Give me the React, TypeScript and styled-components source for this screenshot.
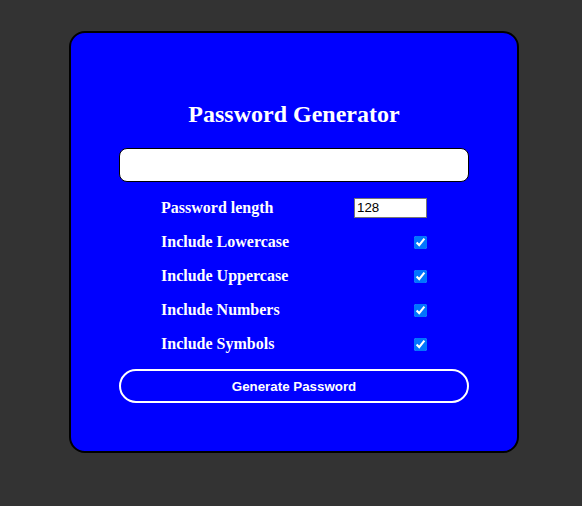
import React from "react";
import styled, { createGlobalStyle } from "styled-components";

const Global = createGlobalStyle`
  html, body {
    margin: 0;
    padding: 0;
    background: #333333;
    width: 582px;
    height: 506px;
    overflow: hidden;
  }
`;

const Page = styled.div`
  padding: 31px 0 0 69px;
`;

const Card = styled.div`
  box-sizing: border-box;
  width: 450px;
  height: 422px;
  background: #0000ff;
  border: 2px solid #000;
  border-radius: 16px;
  padding: 67px 0 0 48px;
  display: flex;
  flex-direction: column;
`;

const Title = styled.h2`
  margin: 0;
  width: 350px;
  text-align: center;
  font-family: "Liberation Serif", "Times New Roman", serif;
  font-weight: bold;
  font-size: 24px;
  line-height: 28px;
  color: #fff;
`;

const Output = styled.input`
  box-sizing: border-box;
  margin-top: 20px;
  width: 350px;
  height: 34px;
  border: 1px solid #000;
  border-radius: 8px;
  background: #fff;
  padding: 0 8px;
  font-family: "Liberation Sans", Arial, sans-serif;
  font-size: 14px;
  outline: none;
`;

const Options = styled.div`
  margin-top: 8px;
  margin-left: 42px;
  width: 266px;
  display: flex;
  flex-direction: column;
`;

const Row = styled.label<{ $first?: boolean }>`
  display: flex;
  align-items: center;
  justify-content: space-between;
  height: ${(p) => (p.$first ? 35 : 34)}px;
  font-family: "Liberation Serif", "Times New Roman", serif;
  font-weight: bold;
  font-size: 16px;
  color: #fff;
`;

const NumberInput = styled.input`
  box-sizing: border-box;
  width: 73px;
  height: 20px;
  margin: 0;
  padding: 1px 2px;
  border: 1px solid #767676;
  background: #fff;
  font-family: "Liberation Sans", Arial, sans-serif;
  font-size: 13.333px;
  color: #000;
`;

const Check = styled.input`
  width: 13px;
  height: 13px;
  margin: 0;
`;

const Button = styled.button`
  box-sizing: border-box;
  margin-top: 8px;
  width: 350px;
  height: 34px;
  border: 2px solid #fff;
  border-radius: 17px;
  background: transparent;
  color: #fff;
  font-family: "Liberation Sans", Arial, sans-serif;
  font-weight: bold;
  font-size: 13.333px;
  cursor: pointer;
`;

const options = [
  "Include Lowercase",
  "Include Uppercase",
  "Include Numbers",
  "Include Symbols",
];

export default function App() {
  return (
    <>
      <Global />
      <Page>
        <Card>
          <Title>Password Generator</Title>
          <Output type="text" readOnly />
          <Options>
            <Row $first>
              Password length
              <NumberInput type="number" defaultValue={128} />
            </Row>
            {options.map((o) => (
              <Row key={o}>
                {o}
                <Check type="checkbox" defaultChecked />
              </Row>
            ))}
          </Options>
          <Button>Generate Password</Button>
        </Card>
      </Page>
    </>
  );
}
